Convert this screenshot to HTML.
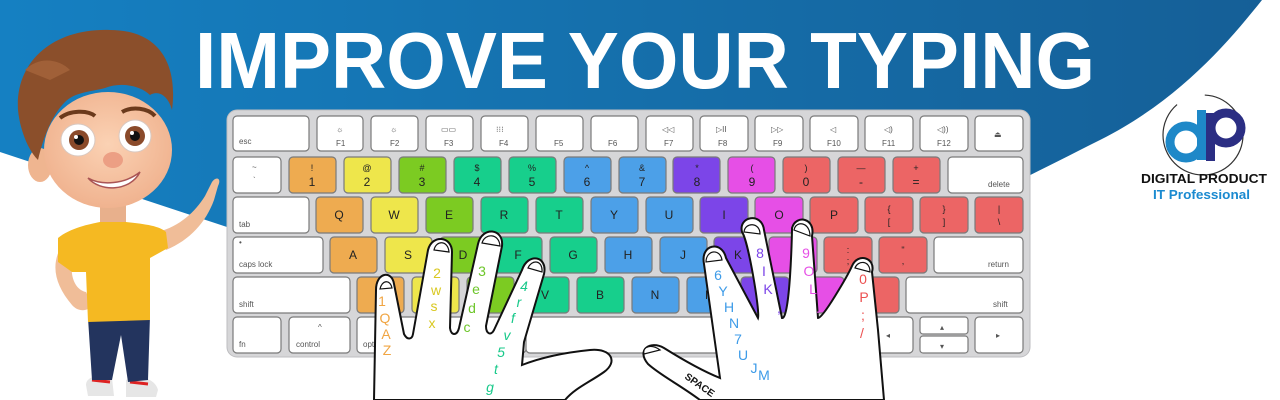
<!DOCTYPE html>
<html><head><meta charset="utf-8"><style>
html,body{margin:0;padding:0}
body{width:1280px;height:400px;overflow:hidden;position:relative;background:#fff;font-family:"Liberation Sans",sans-serif}
svg{position:absolute;left:0;top:0}
</style></head><body>
<svg width="1280" height="400" viewBox="0 0 1280 400" xmlns="http://www.w3.org/2000/svg" font-family="Liberation Sans, sans-serif">
<defs>
<linearGradient id="bg" x1="0" y1="0" x2="1" y2="0">
<stop offset="0" stop-color="#1580c2"/><stop offset="0.5" stop-color="#156fab"/><stop offset="1" stop-color="#155f97"/>
</linearGradient>
<radialGradient id="face" cx="0.5" cy="0.45" r="0.6"><stop offset="0" stop-color="#fbd2b4"/><stop offset="1" stop-color="#efb08c"/></radialGradient>
</defs>
<path d="M0 0 H1262 C1230 40 1180 100 1100 140 C1070 155 1045 168 1020 180 L1000 330 L230 330 L230 228 L0 152 Z" fill="url(#bg)"/>
<!-- Title -->
<text x="195" y="88" font-size="80" font-weight="bold" fill="#fff" textLength="900" lengthAdjust="spacingAndGlyphs" font-family="Liberation Sans, sans-serif">IMPROVE YOUR TYPING</text>
<!-- Keyboard frame -->
<rect x="227" y="110" width="803" height="247" rx="10" fill="#d6d6d8" stroke="#bdbdc0"/>
<g stroke="#7a7a7a" stroke-width="1.2" font-size="9" fill="#fff">
<rect x="233" y="116" width="76" height="35" rx="4"/>
<rect x="317" y="116" width="46" height="35" rx="4"/><rect x="371" y="116" width="47" height="35" rx="4"/><rect x="426" y="116" width="47" height="35" rx="4"/><rect x="481" y="116" width="47" height="35" rx="4"/><rect x="536" y="116" width="47" height="35" rx="4"/><rect x="591" y="116" width="47" height="35" rx="4"/><rect x="646" y="116" width="47" height="35" rx="4"/><rect x="700" y="116" width="48" height="35" rx="4"/><rect x="755" y="116" width="48" height="35" rx="4"/><rect x="810" y="116" width="48" height="35" rx="4"/><rect x="865" y="116" width="48" height="35" rx="4"/><rect x="920" y="116" width="48" height="35" rx="4"/><rect x="975" y="116" width="48" height="35" rx="4"/>
<rect x="233" y="157" width="48" height="36" rx="4"/>
<rect x="289" y="157" width="47" height="36" rx="4" fill="#eeab50"/><rect x="344" y="157" width="47" height="36" rx="4" fill="#eee64b"/><rect x="399" y="157" width="47" height="36" rx="4" fill="#7ccb22"/><rect x="454" y="157" width="47" height="36" rx="4" fill="#17cf8c"/><rect x="509" y="157" width="47" height="36" rx="4" fill="#17cf8c"/><rect x="564" y="157" width="47" height="36" rx="4" fill="#4ca0e8"/><rect x="619" y="157" width="47" height="36" rx="4" fill="#4ca0e8"/><rect x="673" y="157" width="47" height="36" rx="4" fill="#7c45e8"/><rect x="728" y="157" width="47" height="36" rx="4" fill="#e64fe6"/><rect x="783" y="157" width="47" height="36" rx="4" fill="#ec6565"/><rect x="838" y="157" width="47" height="36" rx="4" fill="#ec6565"/><rect x="893" y="157" width="47" height="36" rx="4" fill="#ec6565"/>
<rect x="948" y="157" width="75" height="36" rx="4"/>
<rect x="233" y="197" width="76" height="36" rx="4"/>
<rect x="316" y="197" width="47" height="36" rx="4" fill="#eeab50"/><rect x="371" y="197" width="47" height="36" rx="4" fill="#eee64b"/><rect x="426" y="197" width="47" height="36" rx="4" fill="#7ccb22"/><rect x="481" y="197" width="47" height="36" rx="4" fill="#17cf8c"/><rect x="536" y="197" width="47" height="36" rx="4" fill="#17cf8c"/><rect x="591" y="197" width="47" height="36" rx="4" fill="#4ca0e8"/><rect x="646" y="197" width="47" height="36" rx="4" fill="#4ca0e8"/><rect x="700" y="197" width="48" height="36" rx="4" fill="#7c45e8"/><rect x="755" y="197" width="48" height="36" rx="4" fill="#e64fe6"/><rect x="810" y="197" width="48" height="36" rx="4" fill="#ec6565"/><rect x="865" y="197" width="48" height="36" rx="4" fill="#ec6565"/><rect x="920" y="197" width="48" height="36" rx="4" fill="#ec6565"/><rect x="975" y="197" width="48" height="36" rx="4" fill="#ec6565"/>
<rect x="233" y="237" width="90" height="36" rx="4"/>
<rect x="330" y="237" width="47" height="36" rx="4" fill="#eeab50"/><rect x="385" y="237" width="47" height="36" rx="4" fill="#eee64b"/><rect x="440" y="237" width="47" height="36" rx="4" fill="#7ccb22"/><rect x="495" y="237" width="47" height="36" rx="4" fill="#17cf8c"/><rect x="550" y="237" width="47" height="36" rx="4" fill="#17cf8c"/><rect x="605" y="237" width="47" height="36" rx="4" fill="#4ca0e8"/><rect x="660" y="237" width="47" height="36" rx="4" fill="#4ca0e8"/><rect x="714" y="237" width="48" height="36" rx="4" fill="#7c45e8"/><rect x="769" y="237" width="48" height="36" rx="4" fill="#e64fe6"/><rect x="824" y="237" width="48" height="36" rx="4" fill="#ec6565"/><rect x="879" y="237" width="48" height="36" rx="4" fill="#ec6565"/>
<rect x="934" y="237" width="89" height="36" rx="4"/>
<rect x="233" y="277" width="117" height="36" rx="4"/>
<rect x="357" y="277" width="47" height="36" rx="4" fill="#eeab50"/><rect x="412" y="277" width="47" height="36" rx="4" fill="#eee64b"/><rect x="467" y="277" width="47" height="36" rx="4" fill="#7ccb22"/><rect x="522" y="277" width="47" height="36" rx="4" fill="#17cf8c"/><rect x="577" y="277" width="47" height="36" rx="4" fill="#17cf8c"/><rect x="632" y="277" width="47" height="36" rx="4" fill="#4ca0e8"/><rect x="687" y="277" width="47" height="36" rx="4" fill="#4ca0e8"/><rect x="741" y="277" width="48" height="36" rx="4" fill="#7c45e8"/><rect x="796" y="277" width="48" height="36" rx="4" fill="#e64fe6"/><rect x="851" y="277" width="48" height="36" rx="4" fill="#ec6565"/>
<rect x="906" y="277" width="117" height="36" rx="4"/>
<rect x="233" y="317" width="48" height="36" rx="4"/><rect x="289" y="317" width="61" height="36" rx="4"/><rect x="357" y="317" width="61" height="36" rx="4"/><rect x="426" y="317" width="100" height="36" rx="4"/><rect x="526" y="317" width="340" height="36" rx="4"/>
<rect x="865" y="317" width="48" height="36" rx="4"/><rect x="920" y="317" width="48" height="17" rx="3"/><rect x="920" y="336" width="48" height="17" rx="3"/><rect x="975" y="317" width="48" height="36" rx="4"/>
</g>
<g font-size="8" fill="#555">
<text x="239" y="144">esc</text><text x="336" y="146">F1</text><text x="390" y="146">F2</text><text x="444" y="146">F3</text><text x="499" y="146">F4</text><text x="554" y="146">F5</text><text x="608" y="146">F6</text><text x="664" y="146">F7</text><text x="718" y="146">F8</text><text x="773" y="146">F9</text><text x="827" y="146">F10</text><text x="882" y="146">F11</text><text x="937" y="146">F12</text>
<text x="336" y="132">☼</text><text x="390" y="132">☼</text><text x="441" y="132">▭▭</text><text x="496" y="132">⁝⁝⁝</text><text x="662" y="132">◁◁</text><text x="716" y="132">▷II</text><text x="771" y="132">▷▷</text><text x="830" y="132">◁</text><text x="884" y="132">◁)</text><text x="937" y="132">◁))</text><text x="994" y="137">⏏</text>
<text x="988" y="187">delete</text><text x="239" y="227">tab</text><text x="239" y="267">caps lock</text><text x="239" y="245">•</text><text x="988" y="267">return</text><text x="239" y="307">shift</text><text x="993" y="307">shift</text>
<text x="239" y="347">fn</text><text x="296" y="347">control</text><text x="363" y="347">opt</text>
<text x="318" y="330">^</text><text x="886" y="338">◂</text><text x="940" y="330">▴</text><text x="940" y="349">▾</text><text x="996" y="338">▸</text>
<text x="252" y="170">~</text><text x="253" y="183">`</text>
</g>
<g font-size="12" fill="#222" text-anchor="middle">
<text x="312" y="171" font-size="9">!</text><text x="312" y="186">1</text>
<text x="367" y="171" font-size="9">@</text><text x="367" y="186">2</text>
<text x="422" y="171" font-size="9">#</text><text x="422" y="186">3</text>
<text x="477" y="171" font-size="9">$</text><text x="477" y="186">4</text>
<text x="532" y="171" font-size="9">%</text><text x="532" y="186">5</text>
<text x="587" y="171" font-size="9">^</text><text x="587" y="186">6</text>
<text x="642" y="171" font-size="9">&amp;</text><text x="642" y="186">7</text>
<text x="697" y="171" font-size="9">*</text><text x="697" y="186">8</text>
<text x="752" y="171" font-size="9">(</text><text x="752" y="186">9</text>
<text x="806" y="171" font-size="9">)</text><text x="806" y="186">0</text>
<text x="861" y="171" font-size="9">—</text><text x="861" y="186">-</text>
<text x="916" y="171" font-size="9">+</text><text x="916" y="186">=</text>
<text x="339" y="219">Q</text><text x="394" y="219">W</text><text x="449" y="219">E</text><text x="504" y="219">R</text><text x="559" y="219">T</text><text x="614" y="219">Y</text><text x="669" y="219">U</text><text x="724" y="219">I</text><text x="779" y="219">O</text><text x="834" y="219">P</text>
<text x="889" y="212" font-size="9">{</text><text x="889" y="225" font-size="9">[</text><text x="944" y="212" font-size="9">}</text><text x="944" y="225" font-size="9">]</text><text x="999" y="212" font-size="9">|</text><text x="999" y="225" font-size="9">\</text>
<text x="353" y="259">A</text><text x="408" y="259">S</text><text x="463" y="259">D</text><text x="518" y="259">F</text><text x="573" y="259">G</text><text x="628" y="259">H</text><text x="683" y="259">J</text><text x="738" y="259">K</text>
<text x="848" y="253" font-size="9">:</text><text x="848" y="264" font-size="9">;</text><text x="903" y="253" font-size="9">"</text><text x="903" y="264" font-size="9">,</text>
<text x="545" y="299">V</text><text x="600" y="299">B</text><text x="655" y="299">N</text><text x="710" y="299">M</text>
</g>
<!-- Left hand -->
<path d="M374 400 L376 290 C376 272 392 270 394 284 L404 334 C407 340 412 340 413 334 L428 250 C432 234 452 236 452 252 L450 328 C451 336 457 336 459 328 L478 244 C482 226 504 228 502 246 L486 326 C486 334 491 336 494 330 L522 270 C528 252 548 256 544 274 L524 342 L522 365 C540 358 560 353 590 350 C612 348 618 362 604 372 C590 382 575 388 565 400 Z" fill="#fff" stroke="#111" stroke-width="2"/>
<path d="M380 289 C382 280 390 279 392 288 Z M434 250 C436 240 448 240 449 252 Z M482 243 C485 233 499 233 500 246 Z M528 268 C532 259 543 260 542 272 Z" fill="#fff" stroke="#111" stroke-width="1.2"/>
<g font-size="14" text-anchor="middle">
<g fill="#f0a543"><text x="382" y="306">1</text><text x="385" y="323">Q</text><text x="386" y="339">A</text><text x="387" y="355">Z</text></g>
<g fill="#d9c820"><text x="437" y="278">2</text><text x="436" y="295">w</text><text x="434" y="311">s</text><text x="432" y="328">x</text></g>
<g fill="#6dc62a"><text x="482" y="276">3</text><text x="476" y="294">e</text><text x="472" y="313">d</text><text x="467" y="332">c</text></g>
<g fill="#18c98a" font-style="italic"><text x="524" y="291">4</text><text x="519" y="307">r</text><text x="513" y="323">f</text><text x="507" y="340">v</text><text x="501" y="357">5</text><text x="496" y="374">t</text><text x="490" y="392">g</text></g>
</g>
<!-- Right hand -->
<path d="M700 400 C680 385 660 375 648 364 C636 350 650 340 664 348 C680 358 700 370 720 378 L704 264 C700 244 722 240 726 258 L758 318 C760 310 748 240 742 232 C738 216 762 212 764 230 L782 318 C790 320 792 235 792 228 C796 214 816 218 812 236 L818 318 C822 320 848 275 852 266 C858 252 876 258 872 272 L878 330 L884 400 Z" fill="#fff" stroke="#111" stroke-width="2"/>
<path d="M706 262 C706 250 720 248 722 260 Z M744 232 C745 222 760 222 760 234 Z M794 230 C796 220 810 222 810 236 Z M855 268 C858 260 870 260 870 272 Z M644 354 C642 346 652 344 660 350 Z" fill="#fff" stroke="#111" stroke-width="1.2"/>
<text x="684" y="378" font-size="10" font-weight="bold" fill="#111" transform="rotate(35 684 378)">SPACE</text>
<g font-size="14" text-anchor="middle">
<g fill="#3d9be8"><text x="718" y="280">6</text><text x="723" y="296">Y</text><text x="729" y="312">H</text><text x="734" y="328">N</text><text x="738" y="344">7</text><text x="743" y="360">U</text><text x="754" y="373">J</text><text x="764" y="380">M</text></g>
<g fill="#7c45e8"><text x="760" y="258">8</text><text x="764" y="276">I</text><text x="768" y="294">K</text><text x="779" y="313">,</text></g>
<g fill="#e64fe6"><text x="806" y="258">9</text><text x="809" y="276">O</text><text x="813" y="294">L</text><text x="818" y="313">.</text></g>
<g fill="#ec5050"><text x="863" y="284">0</text><text x="864" y="302">P</text><text x="863" y="320">;</text><text x="862" y="338">/</text></g>
</g>
<!-- Boy -->
<!-- shoes -->
<path d="M86 385 C86 376 100 374 112 378 L114 396 L88 396 Z" fill="#e6e6e6"/>
<path d="M126 380 C138 374 155 378 158 390 L156 397 L126 397 Z" fill="#e6e6e6"/>
<path d="M92 380 L110 382 M130 382 L148 384" stroke="#d22" stroke-width="3"/>
<!-- jeans -->
<path d="M88 318 L150 316 L148 380 L128 382 L121 335 L112 380 L92 380 Z" fill="#23345e"/>
<!-- left arm on hip -->
<path d="M62 245 C50 265 55 285 72 305 C78 312 88 312 92 305 L86 292 C76 290 70 278 72 262 Z" fill="#f0bd98"/>
<!-- right arm pointing -->
<path d="M158 232 C180 226 195 212 205 196 L212 182 C216 176 222 178 218 186 L214 200 C206 222 190 240 166 250 Z" fill="#f0bd98"/>
<!-- neck -->
<rect x="100" y="200" width="26" height="28" fill="#e8b08c"/>
<!-- shirt -->
<path d="M58 238 C70 228 90 224 100 222 L126 222 C145 224 160 226 166 232 L168 248 L150 258 L150 320 L88 322 L86 272 L72 272 L58 262 Z" fill="#f5b922"/>
<!-- ear -->
<ellipse cx="40" cy="165" rx="12" ry="17" fill="#efb590"/>
<!-- face -->
<ellipse cx="108" cy="150" rx="64" ry="58" fill="url(#face)"/>
<!-- hair -->
<path d="M18 110 C15 60 55 28 110 30 C160 30 178 65 172 110 C168 95 158 90 150 95 C140 85 120 82 105 88 C90 92 75 92 65 102 C55 112 45 130 38 160 C28 150 20 130 18 110 Z" fill="#8b4f2b"/>
<path d="M25 70 C40 55 60 60 70 70 L50 80 Z" fill="#a06038"/>
<!-- eyebrows -->
<path d="M60 118 C70 110 88 110 95 116" stroke="#6b3a1c" stroke-width="4" fill="none"/>
<path d="M122 112 C132 106 148 108 155 116" stroke="#6b3a1c" stroke-width="4" fill="none"/>
<ellipse cx="78" cy="140" rx="17" ry="16" fill="#fff" stroke="#d8c8c0"/><ellipse cx="135" cy="136" rx="16" ry="16" fill="#fff" stroke="#d8c8c0"/>
<circle cx="79" cy="140" r="10" fill="#8a4a2a"/><circle cx="135" cy="136" r="10" fill="#8a4a2a"/>
<circle cx="79" cy="140" r="5" fill="#111"/><circle cx="135" cy="136" r="5" fill="#111"/>
<circle cx="76" cy="137" r="2" fill="#fff"/><circle cx="132" cy="133" r="2" fill="#fff"/>
<ellipse cx="113" cy="160" rx="10" ry="8" fill="#ec9f84"/>
<path d="M88 178 C102 186 125 184 140 172 C130 192 100 192 88 178 Z" fill="#fff" stroke="#a55" stroke-width="1.5"/>
<!-- Logo -->
<circle cx="1203" cy="135" r="40" fill="none" stroke="#333" stroke-width="1.2" stroke-dasharray="160 30"/>
<circle cx="1186" cy="142" r="16" fill="none" stroke="#1e88c8" stroke-width="9"/>
<rect x="1197" y="110" width="9" height="50" fill="#1e88c8"/>
<circle cx="1226" cy="128" r="15" fill="none" stroke="#2b2e83" stroke-width="9"/>
<rect x="1206" y="113" width="9" height="48" fill="#2b2e83"/>
<text x="1141" y="183" font-size="12.5" font-weight="bold" fill="#111" textLength="126" lengthAdjust="spacingAndGlyphs">DIGITAL PRODUCT</text>
<text x="1153" y="199" font-size="12.5" font-weight="bold" fill="#1a8ad0" textLength="97" lengthAdjust="spacingAndGlyphs">IT Professional</text>
</svg>
</body></html>
